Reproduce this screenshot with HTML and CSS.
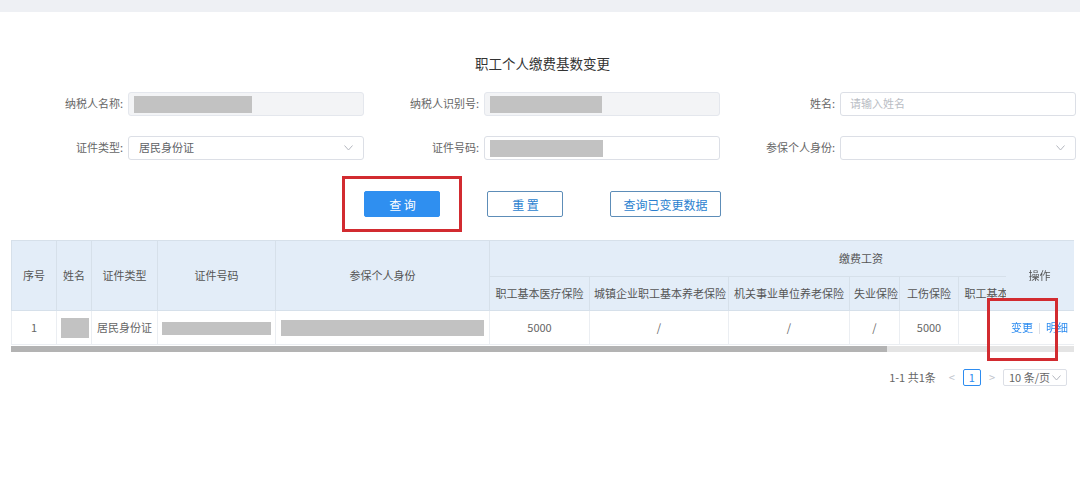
FILE: index.html
```html
<!DOCTYPE html>
<html lang="zh-CN">
<head>
  <meta charset="UTF-8">
  <title>职工个人缴费基数变更</title>
  <link rel="stylesheet" href="styles.css">
</head>
<body>
  <div class="topbar"></div>

  <div class="page">
    <h1 class="title">职工个人缴费基数变更</h1>

    <!-- 查询条件 -->
    <div class="search-form">
      <div class="form-item">
        <label>纳税人名称:</label>
        <div class="input is-disabled"><span class="mask mask-name"></span></div>
      </div>
      <div class="form-item">
        <label>纳税人识别号:</label>
        <div class="input is-disabled"><span class="mask mask-taxid"></span></div>
      </div>
      <div class="form-item">
        <label>姓名:</label>
        <div class="input"><span class="placeholder">请输入姓名</span></div>
      </div>

      <div class="form-item">
        <label>证件类型:</label>
        <div class="input select">
          <span class="value">居民身份证</span>
          <svg class="arrow" width="9" height="6" viewBox="0 0 9 6"><polyline points="0.5,0.5 4.5,5 8.5,0.5" fill="none" stroke="#b4b8bf" stroke-width="1"/></svg>
        </div>
      </div>
      <div class="form-item">
        <label>证件号码:</label>
        <div class="input"><span class="mask mask-idno"></span></div>
      </div>
      <div class="form-item">
        <label>参保个人身份:</label>
        <div class="input select">
          <span class="value"></span>
          <svg class="arrow" width="9" height="6" viewBox="0 0 9 6"><polyline points="0.5,0.5 4.5,5 8.5,0.5" fill="none" stroke="#b4b8bf" stroke-width="1"/></svg>
        </div>
      </div>
    </div>

    <!-- 按钮 -->
    <div class="actions">
      <button class="btn btn-primary marked">查 询</button>
      <button class="btn btn-plain">重 置</button>
      <button class="btn btn-plain">查询已变更数据</button>
    </div>

    <!-- 结果表格 -->
    <div class="table-wrap">
      <div class="table-scroll">
        <table class="grid">
          <colgroup>
            <col style="width:45px"><col style="width:35px"><col style="width:66px"><col style="width:118px">
            <col style="width:214px"><col style="width:100px"><col style="width:139px"><col style="width:121px">
            <col style="width:50px"><col style="width:59px"><col style="width:100px"><col style="width:174px">
            <col style="width:69px">
          </colgroup>
          <thead>
            <tr>
              <th rowspan="2">序号</th>
              <th rowspan="2">姓名</th>
              <th rowspan="2">证件类型</th>
              <th rowspan="2">证件号码</th>
              <th rowspan="2">参保个人身份</th>
              <th colspan="7" class="group">缴费工资</th>
              <th rowspan="2" class="fixed">操作</th>
            </tr>
            <tr class="sub">
              <th>职工基本医疗保险</th>
              <th>城镇企业职工基本养老保险</th>
              <th>机关事业单位养老保险</th>
              <th>失业保险</th>
              <th>工伤保险</th>
              <th>职工基本养老保险</th>
              <th></th>
            </tr>
          </thead>
          <tbody>
            <tr>
              <td>1</td>
              <td><span class="mask cell-name"></span></td>
              <td>居民身份证</td>
              <td><span class="mask cell-idno"></span></td>
              <td><span class="mask cell-type"></span></td>
              <td>5000</td>
              <td>/</td>
              <td>/</td>
              <td>/</td>
              <td>5000</td>
              <td></td>
              <td></td>
              <td class="fixed ops"><a>变更</a><span class="sep"></span><a>明细</a></td>
            </tr>
          </tbody>
        </table>
      </div>
      <div class="scrollbar"><div class="thumb"></div></div>
      <div class="mark-box"></div>
    </div>

    <!-- 分页 -->
    <div class="pager">
      <span class="total">1-1 共1条</span>
      <span class="nav">&lt;</span>
      <span class="page-num">1</span>
      <span class="nav">&gt;</span>
      <span class="size">10 条/页
        <svg width="9" height="6" viewBox="0 0 9 6"><polyline points="0.5,0.5 4.5,5 8.5,0.5" fill="none" stroke="#b4b8bf" stroke-width="1"/></svg>
      </span>
    </div>
  </div>
</body>
</html>
```

FILE: styles.css
```css
/* Base */
body {
  margin: 0;
  background: #fff;
  color: #666;
  font-family: "Noto Sans CJK SC", "Noto Sans", sans-serif;
  font-size: 11px;
  line-height: 1.4;
}

.topbar {
  height: 12px;
  background: #eef0f4;
}

.page {
  padding: 0 6px 0 11px;
}

/* Title */
.title {
  margin: 41px 0 0;
  text-align: center;
  font-size: 13.5px;
  font-weight: normal;
  color: #333;
  line-height: 20px;
}

/* Search form */
.search-form {
  display: grid;
  grid-template-columns: repeat(3, 356px);
  row-gap: 20px;
  margin: 19px 0 0 -3px;
}

.form-item {
  display: flex;
  align-items: center;
}

.form-item label {
  width: 120px;
  padding-right: 5px;
  box-sizing: border-box;
  text-align: right;
  color: #666;
}

.input {
  display: flex;
  align-items: center;
  width: 236px;
  height: 24px;
  padding: 0 10px 0 5px;
  box-sizing: border-box;
  border: 1px solid #dcdfe6;
  border-radius: 3px;
  background: #fff;
}

.input.is-disabled {
  background: #f3f4f6;
  border-color: #e4e7ed;
}

.input .value {
  flex: 1;
  padding-left: 5px;
  color: #606266;
}

.input .placeholder {
  padding-left: 4px;
  color: #b9bdc4;
}

.mask {
  display: inline-block;
  background: #c2c2c2;
}

.mask-name { width: 118px; height: 17px; }
.mask-taxid { width: 112px; height: 17px; }
.mask-idno { width: 113px; height: 17px; }

/* Buttons */
.actions {
  display: flex;
  justify-content: center;
  gap: 47px;
  margin-top: 31px;
}

.btn {
  height: 26px;
  padding: 0 12px;
  border-radius: 2px;
  font-family: inherit;
  font-size: 12px;
  cursor: pointer;
}

.btn-primary {
  width: 76px;
  border: 1px solid #2f8ff0;
  background: #2f8ff0;
  color: #fff;
}

.btn-plain {
  min-width: 76px;
  border: 1px solid #5d8db8;
  background: #fff;
  color: #2b7fcf;
}

.marked {
  position: relative;
}

.marked::after {
  content: "";
  position: absolute;
  top: -16px;
  bottom: -16px;
  left: -23px;
  right: -23px;
  border: 3px solid #d22b30;
}

/* Table */
.table-wrap {
  position: relative;
  margin-top: 23px;
}

.table-scroll {
  overflow: hidden;
}

.grid {
  width: 1290px;
  table-layout: fixed;
  border-collapse: collapse;
}

.grid th,
.grid td {
  padding: 0 4px;
  text-align: center;
  white-space: nowrap;
  overflow: hidden;
  font-weight: normal;
}

.grid th {
  height: 35px;
  background: #e3edf8;
  border: 1px solid #d6e0ea;
  color: #555;
}

.grid tr.sub th {
  height: 33px;
}

.grid td {
  height: 33px;
  border: 1px solid #ebeef2;
  color: #666;
}

.grid td .mask {
  vertical-align: middle;
}

.cell-name { width: 28px; height: 20px; }
.cell-idno { width: 109px; height: 13px; }
.cell-type { width: 203px; height: 16px; }

.grid .fixed {
  position: sticky;
  right: 0;
  box-shadow: -3px 0 4px rgba(0, 0, 0, 0.12);
}

.grid td.fixed {
  background: #fff;
}

.ops a {
  color: #2d8cf0;
  cursor: pointer;
}

.ops .sep {
  display: inline-block;
  width: 1px;
  height: 11px;
  margin: 0 6px;
  background: #dcdfe6;
  vertical-align: middle;
}

/* horizontal scrollbar under the table */
.scrollbar {
  height: 6px;
  margin-top: 1px;
  background: #e4e4e4;
}

.scrollbar .thumb {
  width: 876px;
  height: 100%;
  background: #b3b3b3;
}

.mark-box {
  position: absolute;
  left: 976px;
  top: 58px;
  width: 71px;
  height: 63px;
  border: 3px solid #d22b30;
  box-sizing: border-box;
}

/* Pagination */
.pager {
  display: flex;
  justify-content: flex-end;
  align-items: center;
  gap: 8px;
  margin: 17px 7px 0 0;
  color: #666;
}

.pager .total {
  margin-right: 5px;
}

.pager .nav {
  color: #c0c4cc;
}

.pager .page-num {
  width: 18px;
  height: 17px;
  line-height: 15px;
  box-sizing: border-box;
  border: 1px solid #2d8cf0;
  border-radius: 2px;
  text-align: center;
  color: #2d8cf0;
}

.pager .size {
  display: flex;
  align-items: center;
  justify-content: space-between;
  width: 64px;
  height: 17px;
  padding: 0 5px;
  box-sizing: border-box;
  border: 1px solid #dcdfe6;
  border-radius: 2px;
}
```
